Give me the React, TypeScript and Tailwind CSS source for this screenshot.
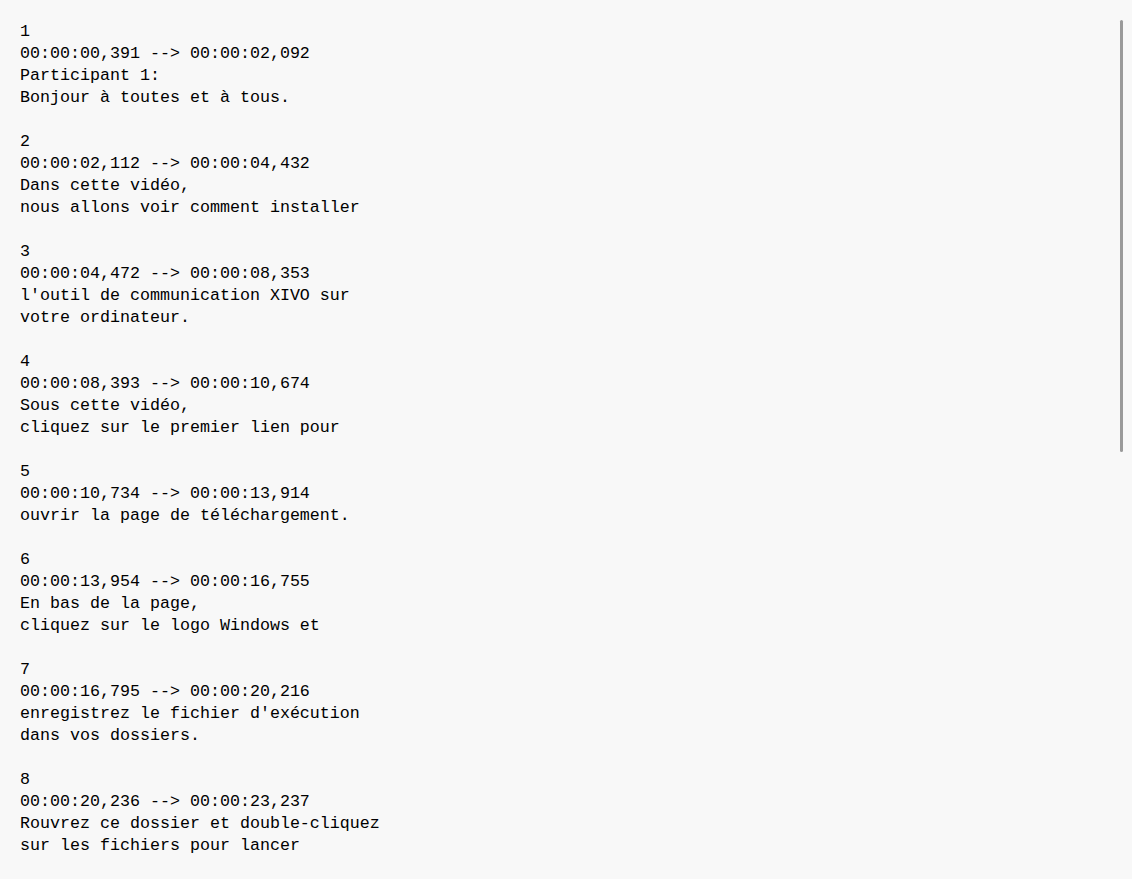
const SUBS = [
  { n: 1, t: "00:00:00,391 --> 00:00:02,092", lines: ["Participant 1:", "Bonjour à toutes et à tous."] },
  { n: 2, t: "00:00:02,112 --> 00:00:04,432", lines: ["Dans cette vidéo,", "nous allons voir comment installer"] },
  { n: 3, t: "00:00:04,472 --> 00:00:08,353", lines: ["l'outil de communication XIVO sur", "votre ordinateur."] },
  { n: 4, t: "00:00:08,393 --> 00:00:10,674", lines: ["Sous cette vidéo,", "cliquez sur le premier lien pour"] },
  { n: 5, t: "00:00:10,734 --> 00:00:13,914", lines: ["ouvrir la page de téléchargement."] },
  { n: 6, t: "00:00:13,954 --> 00:00:16,755", lines: ["En bas de la page,", "cliquez sur le logo Windows et"] },
  { n: 7, t: "00:00:16,795 --> 00:00:20,216", lines: ["enregistrez le fichier d'exécution", "dans vos dossiers."] },
  { n: 8, t: "00:00:20,236 --> 00:00:23,237", lines: ["Rouvrez ce dossier et double-cliquez", "sur les fichiers pour lancer"] },
];

export default function App() {
  const text = SUBS.map((s) => [String(s.n), s.t, ...s.lines].join("\n")).join("\n\n");

  return (
    <div className="relative h-screen w-full overflow-hidden bg-[#f8f8f8]">
      <pre className="px-5 pt-[21px] font-['Liberation_Mono',monospace] text-[16.67px] leading-[22px] text-black whitespace-pre">
        {text}
      </pre>
      {/* scrollbar thumb */}
      <div className="absolute right-[9px] top-[20px] h-[432px] w-[3px] rounded-full bg-[#9a9a9a]" />
    </div>
  );
}
